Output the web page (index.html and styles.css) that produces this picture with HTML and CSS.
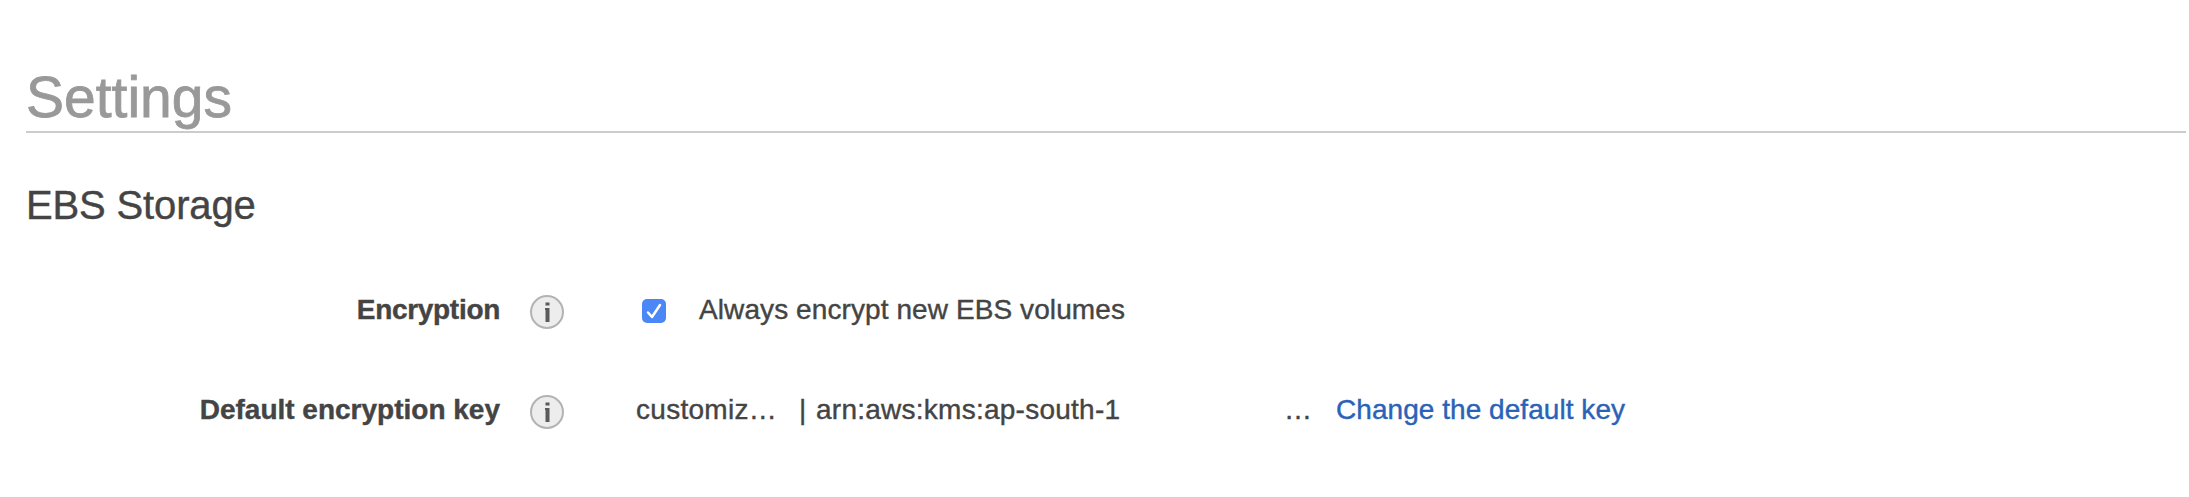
FILE: index.html
```html
<!DOCTYPE html>
<html lang="en"><head><meta charset="utf-8"><title>Settings</title><link rel="stylesheet" href="styles.css"></head>
<body><main class="page">
<h1 class="title">Settings</h1>
<h2 class="subtitle">EBS Storage</h2>
<div class="row"><div class="label short">Encryption</div>
<svg class="info" viewBox="0 0 36 36"><circle cx="18" cy="18" r="16" fill="#ededed" stroke="#b3b3b3" stroke-width="2"/><path d="M16.5 8.5h4v3h-4zM16 14h4.500v14h-4v-12h-.5z" fill="#5a5a5a"/></svg>
<svg class="check" viewBox="0 0 24 24"><rect width="24" height="24" rx="5" fill="#4b87f6"/><path d="M6 13.500l4 4.500 8-12" fill="none" stroke="#fff" stroke-width="2.500" stroke-linecap="round" stroke-linejoin="round"/></svg>
<span class="always">Always encrypt new EBS volumes</span></div>
<div class="row"><div class="label">Default encryption key</div>
<svg class="info" viewBox="0 0 36 36"><circle cx="18" cy="18" r="16" fill="#ededed" stroke="#b3b3b3" stroke-width="2"/><path d="M16.500 8.500h4v3h-4zM16 14h4.500v14h-4v-12h-.5z" fill="#5a5a5a"/></svg>
<span class="alias">customiz…</span><span class="bar">|</span><span class="arn">arn:aws:kms:ap-south-1</span><span class="dots">…</span><a class="link">Change the default key</a></div>
</main></body></html>
```
FILE: styles.css
```css
body{margin:0;background:#fff;color:#444;font-family:"Liberation Sans",Arial,sans-serif;-webkit-text-stroke:.4px currentColor}
.page{padding:60px 3px 0 26px}
.title{margin:0;height:71px;border-bottom:2px solid #ccc;font-size:57px;line-height:74px;font-weight:400;color:#999;-webkit-text-stroke-width:.8px}
.subtitle{margin:42px 0 55px;font-size:40px;line-height:60px;font-weight:400;letter-spacing:-.15px}
.row{display:flex;align-items:center;height:40px;margin-bottom:60px;font-size:28px;white-space:nowrap}
.label{width:474px;text-align:right;font-weight:700}
.short{letter-spacing:-.3px}
.info{width:36px;height:36px;margin:4px 0 0 29px}
.check{width:24px;height:24px;margin:2px 0 0 77px}
.always{margin-left:33px;letter-spacing:.09px}
.alias{margin-left:71px;width:163px;letter-spacing:.28px}
.bar{width:17px}
.arn{width:468px;letter-spacing:.25px}
.dots{width:52px}
.link{color:#2a62b8;letter-spacing:.05px}
```
